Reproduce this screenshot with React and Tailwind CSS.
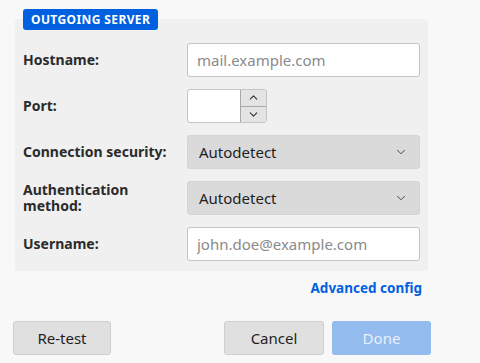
import { ChevronDown, ChevronUp } from 'lucide-react';

const FONT = { fontFamily: '"Noto Sans", "Open Sans", sans-serif' };

const Row = ({ label, children, className = '' }) => (
  <div className={`flex items-center ${className}`}>
    <div className="w-[164px] text-[14px] font-bold leading-[16px] text-[#2b2b2b]">{label}</div>
    {children}
  </div>
);

const TextInput = ({ placeholder }) => (
  <input
    placeholder={placeholder}
    className="w-[233px] h-[34px] rounded-[3px] border border-[#c4c4c4] bg-white px-[9px] text-[15px] text-[#222] placeholder:text-[#8a8a8a] outline-none"
  />
);

const Select = ({ value }) => (
  <div className="w-[233px] h-[34px] rounded-[3px] bg-[#dadada] border border-[#d4d4d4] flex items-center justify-between pl-[11px] pr-[11px] text-[15px] text-[#1f1f1f]">
    <span>{value}</span>
    <ChevronDown size={14} strokeWidth={1.5} className="text-[#333]" />
  </div>
);

export default function App() {
  return (
    <div className="w-[480px] h-[363px] bg-[#f8f8f8] relative overflow-hidden" style={FONT}>
      <div className="pt-[19px] pl-[15px]">
        <div className="w-[413px] h-[252px] bg-[#f0f0f0] rounded-[3px] relative pl-[8px] pt-[24px]">
          <div className="absolute -top-[10px] left-[8px] h-[21px] px-[8px] rounded-[3px] bg-[#0061e0] text-white text-[12px] font-bold flex items-center tracking-[0.4px]">
            OUTGOING SERVER
          </div>
          <div className="flex flex-col gap-[12px]">
            <Row label="Hostname:">
              <TextInput placeholder="mail.example.com" />
            </Row>
            <Row label="Port:">
              <div className="w-[80px] h-[34px] rounded-[3px] border border-[#c4c4c4] bg-white flex justify-end">
                <div className="w-[26px] h-full flex flex-col border-l border-[#a8a8a8]">
                  <div className="flex-1 bg-[#e4e4e4] flex items-center justify-center border-b border-[#a8a8a8] rounded-tr-[2px]">
                    <ChevronUp size={13} strokeWidth={2} className="text-[#333]" />
                  </div>
                  <div className="flex-1 bg-[#e4e4e4] flex items-center justify-center rounded-br-[2px]">
                    <ChevronDown size={13} strokeWidth={2} className="text-[#333]" />
                  </div>
                </div>
              </div>
            </Row>
            <Row label="Connection security:">
              <Select value="Autodetect" />
            </Row>
            <Row label={<>Authentication<br />method:</>}>
              <Select value="Autodetect" />
            </Row>
            <Row label="Username:">
              <TextInput placeholder="john.doe@example.com" />
            </Row>
          </div>
        </div>
      </div>
      <div className="flex justify-end pr-[58px] mt-[7px]">
        <a className="text-[13.5px] font-bold text-[#0061e0]">Advanced config</a>
      </div>
      <div className="flex items-center pl-[13px] pr-[49px] mt-[23px]">
        <button className="w-[98px] h-[34px] rounded-[3px] bg-[#e0e0e0] border border-[#cfcfcf] text-[15px] text-[#1f1f1f]">Re-test</button>
        <div className="flex-1" />
        <button className="w-[100px] h-[34px] rounded-[3px] bg-[#e0e0e0] border border-[#cfcfcf] text-[15px] text-[#1f1f1f]">Cancel</button>
        <button className="ml-[8px] w-[99px] h-[34px] rounded-[3px] bg-[#93bbed] text-[15px] text-[#e8f0fb]">Done</button>
      </div>
    </div>
  );
}
